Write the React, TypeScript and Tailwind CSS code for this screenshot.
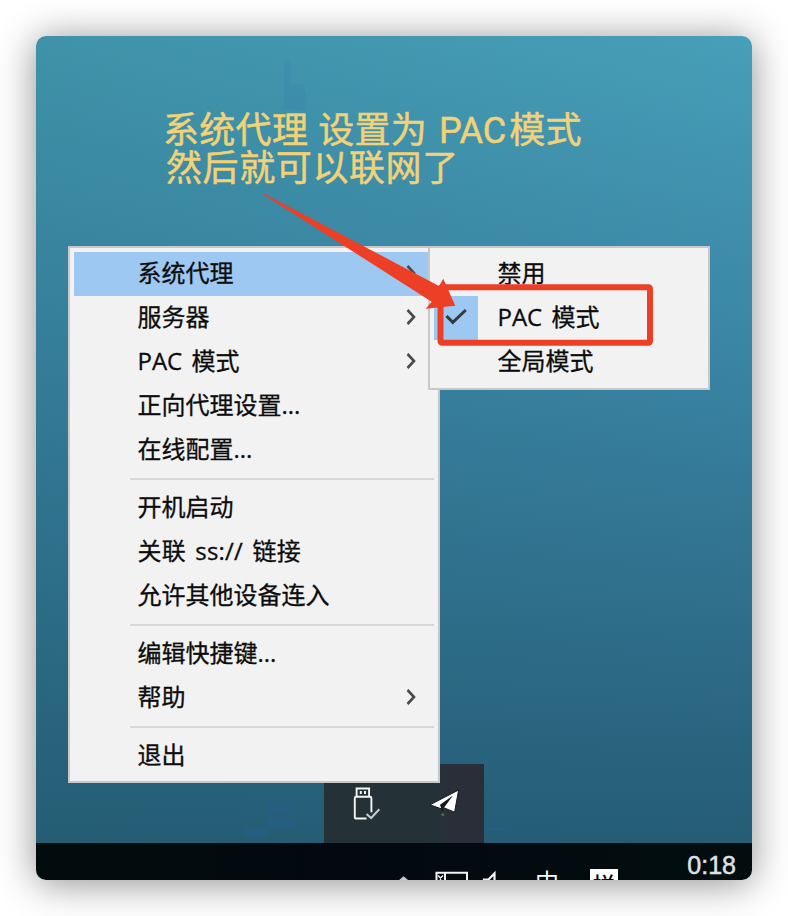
import React from "react";

type Entry = { label: string; arrow?: boolean; active?: boolean };

const groups: Entry[][] = [
  [
    { label: "系统代理", arrow: true, active: true },
    { label: "服务器", arrow: true },
    { label: "PAC 模式", arrow: true },
    { label: "正向代理设置..." },
    { label: "在线配置..." },
  ],
  [{ label: "开机启动" }, { label: "关联 ss:// 链接" }, { label: "允许其他设备连入" }],
  [{ label: "编辑快捷键..." }, { label: "帮助", arrow: true }],
  [{ label: "退出" }],
];

const menuFont =
  "font-['Open_Sans','Noto_Sans_CJK_SC',sans-serif] text-[24px] leading-[44px] text-[#0c0c0c] whitespace-pre [word-spacing:3px] [-webkit-text-stroke:0.3px_#0c0c0c]";

function Chevron() {
  return (
    <svg className="relative -top-px" width="10" height="18" viewBox="0 0 10 18" fill="none" stroke="#4a4a4a" strokeWidth="2.6">
      <path d="M1.5 2 8 9l-6.5 7" />
    </svg>
  );
}

function MainMenu() {
  return (
    <div className="absolute left-[32px] top-[210px] h-[537px] w-[372px] border-2 border-[#c6c8c9] bg-[#f2f2f2] px-1 pt-1">
      {groups.map((group, g) => (
        <div key={g}>
          {g > 0 && (
            <div className="flex h-[14px] items-center pl-[56px]">
              <div className="h-[2px] w-full bg-[#d8d8d8]" />
            </div>
          )}
          {group.map((e) => (
            <div
              key={e.label}
              className={`flex h-[44px] items-center justify-between pl-[63.5px] pr-[18px] ${e.active ? "bg-[#9dc8f2]" : ""}`}
            >
              <span className={`${menuFont} relative -top-px ${e.label.includes("ss://") ? "tracking-[0.2px]" : ""}`}>
                {e.label}
              </span>
              {e.arrow && <Chevron />}
            </div>
          ))}
        </div>
      ))}
    </div>
  );
}

function SubMenu() {
  return (
    <div className="absolute left-[392px] top-[210px] h-[143.5px] w-[282px] border-2 border-[#c6c8c9] bg-[#f2f2f2] px-1 pt-1">
      {["禁用", "PAC 模式", "全局模式"].map((label, i) => (
        <div key={label} className="flex h-[44px] items-center">
          <div className={`flex h-full w-[44px] items-center justify-center ${i === 1 ? "bg-[#9dc8f2]" : ""}`}>
            {i === 1 && (
              <svg className="relative -top-px" width="24" height="18" viewBox="0 0 24 18" fill="none" stroke="#333a40" strokeWidth="3">
                <path d="m2.5 8 6.3 6.3L21.8 2" />
              </svg>
            )}
          </div>
          <span className={`${menuFont} relative -top-px ml-[19.5px]`}>{label}</span>
        </div>
      ))}
    </div>
  );
}

function Tray() {
  return (
    <div className="absolute bottom-0 left-[288px] h-[79px] w-[160px] bg-linear-to-r from-[#243238] from-70% to-[#292e38] to-80%">
      <svg width="160" height="79" viewBox="324 764 160 79" fill="none">
        <g stroke="#f4f6f6" strokeWidth="1.9">
          <path d="M356.6 796.500v-8h12.500v8" />
          <path d="M366.500 818.500h-10.700q-1 0-1-1V798.200q0-1.400 1.400-1.400h13.800q1.400 0 1.400 1.400v14" />
          <path d="M360.800 791v3M365 791v3" strokeWidth="2" />
          <path d="m366.500 814 4.600 4 8.200-8.700" stroke="#c6cccd" strokeWidth="2" />
        </g>
        <path d="M458.600 790 430 804.800l7 2.500 4.600 1.600 1.400-1.500 11.600 4.800z" fill="#fff" stroke="#14191c" strokeWidth="1" />
        <path d="m453 795.500-13 9.200 1.200 3.900.8 4.400 1.500-4.800z" fill="#14191c" />
        <circle cx="442.800" cy="814.500" r="1.500" fill="#625e5c" />
      </svg>
    </div>
  );
}

function Taskbar() {
  return (
    <div className="flex h-[37px] shrink-0 overflow-hidden bg-linear-to-r from-[#020c0d] from-16% via-[#030811] via-40% to-[#020d0f] to-85% text-white">
      <svg className="shrink-0" width="464" height="37" viewBox="36 843 464 37" fill="none" stroke="#f3f4f5">
        <path d="m398 882.500 5.600-4.700 5.600 4.700" strokeWidth="2.4" stroke="#c7cbcd" />
        <path d="M436.500 882v-9.300H467V882M445 873v9" strokeWidth="2" />
        <path d="m438 875.500 2.500 2.500 2.500-2.500M440.500 877v4" strokeWidth="1.500" />
        <path d="M484 882v-2.500h4.500l6-6V882" strokeWidth="2.200" />
      </svg>
      <span className="ml-[35px] mt-[26px] w-[24px] shrink-0 font-['Noto_Sans_CJK_SC',sans-serif] text-[24px] leading-[24px]">中</span>
      <span className="ml-[31px] mt-[26px] flex h-[28px] w-[28px] shrink-0 justify-center bg-white font-['Noto_Sans_CJK_SC',sans-serif] text-[22px] font-medium leading-[28px] text-[#080808]">
        拼
      </span>
      <span className="ml-auto mr-[16px] mt-[9.5px] font-['Liberation_Sans',sans-serif] text-[25px] leading-[25px] text-[#dfe2e2] [-webkit-text-stroke:0.5px_#dfe2e2]">
        0:18
      </span>
    </div>
  );
}

function Note() {
  return (
    <div className="absolute left-[127px] top-[76px] font-['Roboto','Noto_Sans_CJK_SC',sans-serif] text-[36px] leading-[38px] text-[#f3d277] [-webkit-text-stroke:0.5px_#f3d277]">
      <div className="flex whitespace-nowrap tracking-[0.3px]">
        <span>系统代理</span>
        <span className="ml-[10px]">设置为</span>
        <span className="ml-[12px] tracking-normal">PAC</span>
        <span className="ml-[3px]">模式</span>
      </div>
      <div className="ml-[3px] whitespace-nowrap tracking-[0.6px]">然后就可以联网了</div>
    </div>
  );
}

function Wallpaper() {
  return (
    <>
      <div className="absolute inset-0 bg-linear-to-r from-[#1f5f6b]/20 via-[#1f5f6b]/10 to-transparent" />
      <svg className="absolute left-0 top-0" width="716" height="807" viewBox="36 36 716 807" fill="#2464b4">
        <path d="M284 60h7v24h12l3 12v14h-22z" opacity=".09" />
        <path d="M268 804h23v9h-23zM268 818h28v9h-28zM244 828h24v9h-24z" opacity=".16" />
        <path d="M484 828h23v2h-23z" opacity=".25" />
      </svg>
    </>
  );
}

export default function App() {
  return (
    <div className="h-[916px] w-[788px] overflow-hidden bg-white p-[36px]">
      <div className="flex h-[844px] w-[716px] flex-col overflow-hidden rounded-[10px] shadow-[0_3px_38px_rgba(0,0,0,0.45)]">
        <div className="relative min-h-0 flex-1 bg-linear-to-b from-[#479fb8] via-[#3a84a4] via-40% to-[#255c76]">
          <Wallpaper />
          <Note />
          <Tray />
          <MainMenu />
          <SubMenu />
          <svg className="absolute left-0 top-0" width="716" height="807" viewBox="36 36 716 807">
            <rect x="440.500" y="287.300" width="209.500" height="55.400" rx="1.500" fill="none" stroke="#ed3f25" strokeWidth="6" />
            <path d="M263.500 194.500 264.500 193.800 439 286l4.300-7.300 12 27-29.600 3 6-7z" fill="#ed3f25" />
          </svg>
        </div>
        <Taskbar />
      </div>
    </div>
  );
}
